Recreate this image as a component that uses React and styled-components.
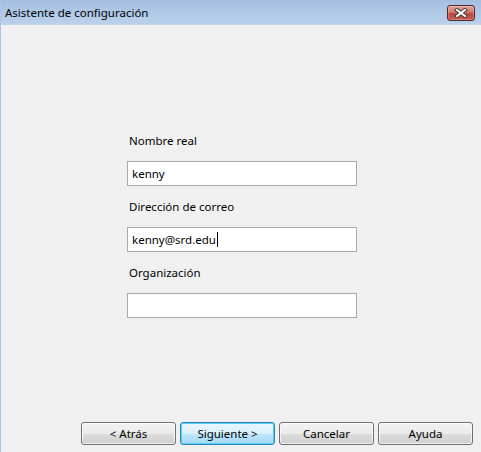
import React from 'react'
import styled, { createGlobalStyle } from 'styled-components'

const Global = createGlobalStyle`
  html, body {
    margin: 0;
    padding: 0;
    background: #f0f0f0;
  }
  body {
    font-family: "Noto Sans", "Liberation Sans", sans-serif;
    font-size: 11.5px;
    color: #000;
  }
`

const Window = styled.div`
  width: 481px;
  height: 452px;
  display: flex;
  flex-direction: column;
  box-sizing: border-box;
  border-left: 1px solid #a9c6e6;
  background: #f0f0f0;
`

const TitleBar = styled.div`
  height: 25px;
  flex: none;
  display: flex;
  align-items: center;
  justify-content: space-between;
  padding: 0 6px 0 4px;
  background: linear-gradient(#a4bfdf, #bad2ec);
`

const Title = styled.span`
  font-size: 11.5px;
  color: #000;
  margin-top: -1px;
`

const CloseBtn = styled.div`
  width: 28px;
  height: 16px;
  margin-top: 1px;
  box-sizing: border-box;
  border: 1px solid #4d2733;
  border-radius: 3px;
  background: linear-gradient(#e3a59c 0%, #d2766a 45%, #c2473b 55%, #c75a4c 100%);
  box-shadow: inset 0 0 0 1px rgba(255, 255, 255, 0.25);
  display: flex;
  align-items: center;
  justify-content: center;
`

const Body = styled.div`
  flex: 1;
  display: flex;
  flex-direction: column;
  padding: 108px 8px 7px 0;
`

const Form = styled.div`
  margin-left: 126px;
  width: 230px;
  display: flex;
  flex-direction: column;
  gap: 13px;
`

const Field = styled.div`
  display: flex;
  flex-direction: column;
  gap: 12px;
`

const Label = styled.span`
  line-height: 16px;
  padding-left: 2px;
`

const TextBox = styled.div`
  height: 25px;
  box-sizing: border-box;
  border: 1px solid #a9a9a9;
  background: #fff;
  display: flex;
  align-items: center;
  padding-left: 4px;
  font-size: 11.5px;
`

const Caret = styled.span`
  display: inline-block;
  width: 1px;
  height: 15px;
  background: #000;
  margin-left: 1px;
`

const Footer = styled.div`
  margin-top: auto;
  display: flex;
  justify-content: flex-end;
  gap: 4px;
`

const Button = styled.button`
  width: 95px;
  height: 23px;
  box-sizing: border-box;
  font-family: inherit;
  font-size: 11.5px;
  color: #000;
  padding: 0;
  border-radius: 3px;
  border: 1px solid ${p => (p.$default ? '#3c7fb1' : '#707070')};
  background: ${p =>
    p.$default
      ? 'linear-gradient(#eaf6fd 0%, #d9f0fc 50%, #bee6fd 51%, #a7d9f5 100%)'
      : 'linear-gradient(#f2f2f2 0%, #ebebeb 50%, #dddddd 51%, #cfcfcf 100%)'};
  box-shadow: inset 0 0 0 1px ${p => (p.$default ? '#48d4fb' : 'rgba(255,255,255,0.7)')};
`

function CloseIcon() {
  return (
    <svg width="14" height="10" viewBox="0 0 14 10">
      <path d="M3 2 L11 8 M11 2 L3 8" stroke="#3a3a3a" strokeWidth="4" strokeLinecap="square" />
      <path d="M3 2 L11 8 M11 2 L3 8" stroke="#fff" strokeWidth="2" strokeLinecap="square" />
    </svg>
  )
}

const fields = [
  { label: 'Nombre real', value: 'kenny' },
  { label: 'Dirección de correo', value: 'kenny@srd.edu', focused: true },
  { label: 'Organización', value: '' },
]

export default function App() {
  return (
    <Window>
      <Global />
      <TitleBar>
        <Title>Asistente de configuración</Title>
        <CloseBtn><CloseIcon /></CloseBtn>
      </TitleBar>
      <Body>
        <Form>
          {fields.map(({ label, value, focused }) => (
            <Field key={label}>
              <Label>{label}</Label>
              <TextBox>
                {value}
                {focused && <Caret />}
              </TextBox>
            </Field>
          ))}
        </Form>
        <Footer>
          <Button>&lt; Atrás</Button>
          <Button $default>Siguiente &gt;</Button>
          <Button>Cancelar</Button>
          <Button>Ayuda</Button>
        </Footer>
      </Body>
    </Window>
  )
}
